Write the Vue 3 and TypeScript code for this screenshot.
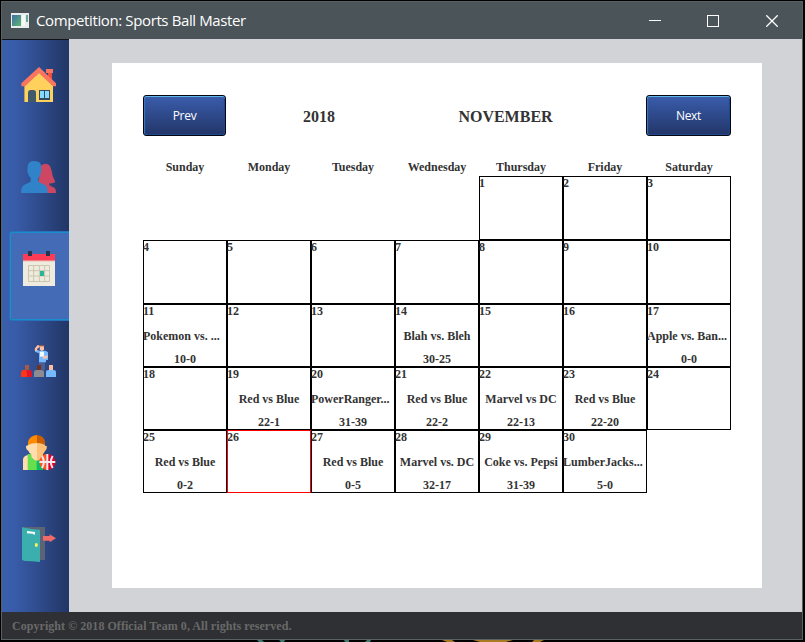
<script setup lang="ts">
interface DayCell {
  day: number | null
  match?: string
  score?: string
  today?: boolean
}

const weekdays: string[] = ['Sunday', 'Monday', 'Tuesday', 'Wednesday', 'Thursday', 'Friday', 'Saturday']
const firstWeekday = 4
const daysInMonth = 30
const today = 26

const games: Record<number, [string, string]> = {
  11: ['Pokemon vs. ...', '10-0'],
  14: ['Blah vs. Bleh', '30-25'],
  17: ['Apple vs. Ban...', '0-0'],
  19: ['Red vs Blue', '22-1'],
  20: ['PowerRanger...', '31-39'],
  21: ['Red vs Blue', '22-2'],
  22: ['Marvel vs DC', '22-13'],
  23: ['Red vs Blue', '22-20'],
  25: ['Red vs Blue', '0-2'],
  27: ['Red vs Blue', '0-5'],
  28: ['Marvel vs. DC', '32-17'],
  29: ['Coke vs. Pepsi', '31-39'],
  30: ['LumberJacks...', '5-0'],
}

const cells: DayCell[] = []
for (let i = 0; i < firstWeekday; i++) cells.push({ day: null })
for (let d = 1; d <= daysInMonth; d++) {
  const game = games[d]
  cells.push({ day: d, match: game?.[0], score: game?.[1], today: d === today })
}
</script>

<template>
  <div class="desktop">
    <div class="window">
      <header class="titlebar">
        <svg class="app-icon" width="18" height="15" viewBox="0 0 18 15">
          <defs>
            <linearGradient id="appFill" x1="0" y1="0" x2="1" y2="1">
              <stop offset="0" stop-color="#3f6fa8" />
              <stop offset="1" stop-color="#5fb56b" />
            </linearGradient>
          </defs>
          <rect width="18" height="15" fill="#e9eced" />
          <rect x="1" y="2" width="9" height="11" fill="url(#appFill)" />
          <rect x="11" y="2" width="3" height="11" fill="#f8f8f8" />
          <rect x="15" y="2" width="2" height="7" fill="#6aa59a" />
        </svg>
        <span class="title">Competition: Sports Ball Master</span>
        <div class="controls">
          <svg width="12" height="12" viewBox="0 0 12 12"><path d="M0 5.5H12" /></svg>
          <svg width="12" height="12" viewBox="0 0 12 12"><rect x=".5" y=".5" width="11" height="11" /></svg>
          <svg width="12" height="12" viewBox="0 0 12 12"><path class="close" d="M.3 .3L11.7 11.7M11.7 .3L.3 11.7" /></svg>
        </div>
      </header>

      <div class="body">
        <nav class="sidebar">
          <a class="item">
            <svg viewBox="0 0 108 108">
              <path fill="#ffd05b" d="M10 54L54 14L96 54V108H10Z" />
              <path fill="#ad9d72" d="M9 60h3v48H9z" />
              <path fill="#f0513c" d="M81 20h12v26l-12-10z" />
              <path fill="#f77561" d="M75 9h21v12H75z" />
              <path fill="#f77561" d="M54 3L105 52V61H96L54 22L12 61H1V52Z" />
              <path fill="#415a6b" d="M21 108V80q0-8 8-8h8q8 0 8 8V108Z" />
              <path fill="#344a5e" d="M54 72h33v30H54z" />
              <path fill="#84dbff" d="M57 75h12v21H57zM72 75h12v21H72z" />
            </svg>
          </a>
          <a class="item">
            <svg viewBox="0 0 108 108">
              <path fill="#cd4762" d="M61 22Q75 12 87 24Q93 38 95 54L103 72Q97 77 85 76V82L101 90Q105 93 105 105H65L52 72Z" />
              <path fill="#3083c9" d="M20 24Q22 9 40 9Q61 9 61 28L60 44Q57 55 52 60V71L72 81Q80 86 80 105H0Q0 87 9 81L29 71V60Q23 54 19 42Z" />
            </svg>
          </a>
          <a class="item selected">
            <svg viewBox="0 0 108 108">
              <path fill="#efebde" d="M6 33h96v75H6z" />
              <path fill="#ff3b55" d="M6 12h96v21H6z" />
              <path fill="#e8a59d" d="M6 31h96v3H6z" />
              <path fill="#26364e" d="M21 3h12v15H21zM75 3h12v15H75z" />
              <path fill="none" stroke="#cbc7af" stroke-width="3" d="M22.5 46.5h63v48h-63zM38 46v48M55 46v48M71 46v48M22 62h64M22 78h64" />
              <path fill="#27b697" d="M57 63h12v15H57z" />
            </svg>
          </a>
          <a class="item">
            <svg viewBox="0 0 108 108">
              <path fill="#4b5e91" d="M54 58h18v27H54z" />
              <path fill="#75b9ff" d="M43 23L57 26H74L81 31V54H75V61H54V34L42 29Z" />
              <path fill="#f3f7ff" d="M57 29h12v15H57z" />
              <path fill="#ffc1a6" d="M57 12h12v11l-6 4l-7-4zM41 20L49 10H57V14L48 21L49 27H42ZM70 42L80 40V47L72 50H64Z" />
              <path fill="#845d57" d="M54 9h15v4H54z" />
              <path fill="#a75a43" d="M12 69h12v15H12z" />
              <path fill="#ff3519" d="M0 105V93Q0 84 8 84H16L26 105Z" />
              <path fill="#de1729" d="M16 84h9q8 0 8 9v12H19z" />
              <path fill="#75301f" d="M48 69h12v15H48z" />
              <path fill="#8b8b91" d="M39 105V91q0-7 8-7h14q8 0 8 7v14z" />
              <path fill="#ffbda2" d="M84 69h12v15H84z" />
              <path fill="#75b9ff" d="M75 105V91q0-7 8-7h14q8 0 8 7v14z" />
            </svg>
          </a>
          <a class="item">
            <svg viewBox="0 0 108 108">
              <path fill="#ffddac" d="M6 108V76Q7 65 22 63V108Z" />
              <path fill="#66df4f" d="M20 60h28v48H20z" />
              <path fill="#0dbb61" d="M47 60h19v48H47z" />
              <path fill="#ffddac" d="M21 24H48V80Q40 80 32 70L31 61Q24 57 22 50Q15 48 15 36L21 34Z" />
              <path fill="#ffc176" d="M48 24H72V35L78 37Q78 47 73 50L66 61V71Q57 80 48 80Z" />
              <path fill="#ff8b00" d="M48 3V27Q32 27 21 33V26Q24 5 48 3Z" />
              <path fill="#c95f00" d="M48 3Q71 5 72 26V33Q63 27 48 27Z" />
              <path fill="#ff5425" d="M79 60A24 24 0 0 0 79 108Z" />
              <path fill="#e20027" d="M79 60A24 24 0 0 1 79 108Z" />
              <path fill="none" stroke="#f1e9ee" stroke-width="6" d="M79 60V108M55 84H103M63 66Q74 84 63 102M95 66Q84 84 95 102" />
            </svg>
          </a>
          <a class="item">
            <svg viewBox="0 0 108 108">
              <path fill="#5b6374" d="M3 3h69v99H3z" />
              <path fill="#3aafae" d="M3 4L32 9L57 11V108L32 106L12 105L3 102Z" />
              <path fill="#fff" d="M18 15L42 18V26L36 25V23L18 22Z" />
              <ellipse fill="#fff15c" cx="46" cy="57" rx="4.5" ry="6" />
              <path fill="#f16a6a" d="M66 30H86V25L105 37L86 49V44H66Z" />
            </svg>
          </a>
        </nav>

        <main class="content">
          <section class="card">
            <div class="toolbar">
              <button class="btn prev" type="button">Prev</button>
              <span class="year">2018</span>
              <span class="month">NOVEMBER</span>
              <button class="btn next" type="button">Next</button>
            </div>
            <div class="weekdays">
              <span v-for="name in weekdays" :key="name">{{ name }}</span>
            </div>
            <div class="grid">
              <div
                v-for="(cell, index) in cells"
                :key="index"
                class="cell"
                :class="{ blank: cell.day === null, today: cell.today }"
              >
                <span class="day">{{ cell.day }}</span>
                <span class="match" :class="{ clipped: cell.match?.endsWith('...') }">{{ cell.match }}</span>
                <span class="score">{{ cell.score }}</span>
              </div>
            </div>
          </section>
        </main>
      </div>

      <footer class="footer"><span>Copyright © 2018 Official Team 0, All rights reserved.</span></footer>
    </div>
    <svg class="backdrop" width="805" height="2" viewBox="0 0 805 2">
      <path fill="#3c7a73" d="M257 0h5l2 2h-5zM279 0h6l-1 2h-3zM344 0h5v2h-4zM367 0h4l-1 2h-5z" />
      <path fill="#a87a22" d="M442 0h10l3 2h-8zM473 0h40l-7 2h-26zM534 0h10l-4 2h-8z" />
    </svg>
  </div>
</template>

<style>
body {
  margin: 0;
  background: #000;
  overflow: hidden;
}
</style>

<style scoped>
.desktop {
  box-sizing: border-box;
  width: 805px;
  height: 642px;
  padding-top: 1px;
  background: #000;
  overflow: hidden;
  font-family: "Liberation Serif", serif;
  font-weight: bold;
  color: #333;
}
.window {
  box-sizing: border-box;
  width: 802px;
  height: 639px;
  margin-left: 1px;
  border: 1px solid #596163;
  display: flex;
  flex-direction: column;
}
.titlebar {
  height: 37px;
  flex: none;
  background: #4b5459;
  display: flex;
  align-items: center;
}
.app-icon {
  margin: 0 7px 0 9px;
}
.title {
  font: 15px/20px "Open Sans", sans-serif;
  margin-top: -2px;
  color: #fff;
  letter-spacing: -0.38px;
  white-space: nowrap;
}
.controls {
  margin-left: auto;
  margin-right: 24px;
  display: flex;
  gap: 46px;
}
.controls svg {
  fill: none;
  stroke: #fff;
  stroke-width: 1;
}
.controls svg:last-child {
  margin-left: 1px;
}
.controls .close {
  stroke-width: 1.3;
}
.backdrop {
  display: block;
}
.body {
  flex: 1;
  display: flex;
  min-height: 0;
}
.sidebar {
  box-sizing: border-box;
  width: 67px;
  border-top: 1px solid #10131c;
  padding: 8px 0 0 8px;
  display: flex;
  flex-direction: column;
  gap: 4px;
  background: linear-gradient(90deg, #395fae 0%, #385ba7 22%, #223666 100%);
}
.item {
  box-sizing: border-box;
  height: 88px;
  flex: none;
  padding: 18px 0 0 11px;
}
.item svg {
  display: block;
  width: 36px;
  height: 36px;
}
.item.selected {
  background: #446bb6;
  box-shadow: inset 1px 1px 0 #168fcc, inset 0 -1px 0 #168fcc, 0 0 0 1px #2672bd;
  clip-path: inset(-1px 0 -1px -1px);
  border-radius: 2px 0 0 2px;
}
.content {
  flex: 1;
  padding: 24px 0 0 43px;
  background: #d2d3d7;
}
.card {
  box-sizing: border-box;
  width: 650px;
  height: 525px;
  padding: 32px 31px 0;
  background: #fff;
}
.toolbar {
  display: grid;
  grid-template-columns: 83px 186px 187px 47px 85px;
  height: 41px;
  align-items: center;
  text-align: center;
  font-size: 16px;
}
.year,
.month {
  padding-top: 2px;
}
.next {
  grid-column: 5;
}
.btn {
  height: 41px;
  padding: 0;
  border: 1px solid #03060e;
  border-radius: 3px;
  background: linear-gradient(#3a5dac, #223568);
  box-shadow: inset 0 1px 0 #5fb5e8, inset 1px 0 1px #387cc4, inset -1px -1px 1px #20468c;
  color: #fff;
  font: 12px "Open Sans", sans-serif;
  letter-spacing: -0.3px;
}
.weekdays {
  display: grid;
  grid-template-columns: repeat(7, 84px);
  height: 40px;
  padding-top: 24px;
  box-sizing: border-box;
  text-align: center;
  font-size: 12px;
  line-height: 14px;
}
.grid {
  display: grid;
  grid-template-columns: repeat(7, 84px);
  grid-template-rows: 64px 64px 63px 63px 63px;
}
.cell {
  box-sizing: border-box;
  border: 1px solid #000;
  display: flex;
  flex-direction: column;
  font-size: 12px;
  line-height: 14px;
  white-space: nowrap;
  min-width: 0;
}
.cell.blank {
  border-color: transparent;
}
.cell.today {
  border-color: #f00;
}
.day {
  flex: none;
  margin: -1px 0 0 -1px;
  height: 25px;
}
.match {
  flex: none;
  height: 23px;
  margin: 0 -1px;
  text-align: center;
}
.match.clipped {
  text-align: left;
}
.score {
  text-align: center;
}
.footer {
  height: 27px;
  flex: none;
  padding-left: 10px;
  background: #2f3033;
  color: #696969;
  font-size: 12px;
  line-height: 28px;
  letter-spacing: 0.05px;
}
</style>
